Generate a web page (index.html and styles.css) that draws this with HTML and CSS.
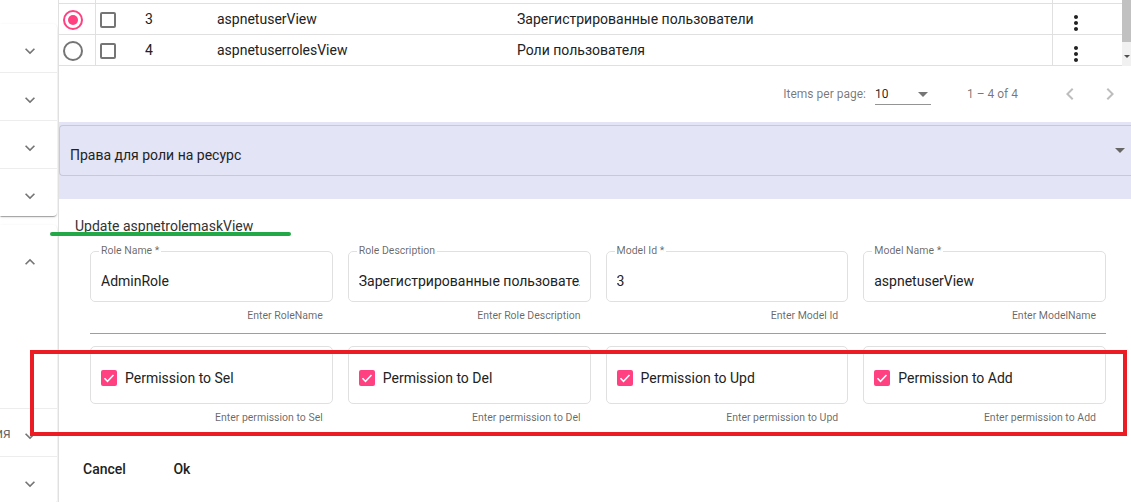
FILE: index.html
```html
<!DOCTYPE html>
<html lang="ru">
<head>
<meta charset="utf-8">
<title>Roles</title>
<link rel="stylesheet" href="styles.css">
</head>
<body>
<div class="app">
  <aside class="sidebar">
    <div class="sb-top"></div>
    <div class="sb-group">
      <div class="sb-panel"><svg class="chev" viewBox="0 0 24 24"><path d="M16.59 8.59L12 13.17 7.41 8.59 6 10l6 6 6-6z"/></svg></div>
      <div class="sb-panel"><svg class="chev" viewBox="0 0 24 24"><path d="M16.59 8.59L12 13.17 7.41 8.59 6 10l6 6 6-6z"/></svg></div>
      <div class="sb-panel"><svg class="chev" viewBox="0 0 24 24"><path d="M16.59 8.59L12 13.17 7.41 8.59 6 10l6 6 6-6z"/></svg></div>
      <div class="sb-panel"><svg class="chev" viewBox="0 0 24 24"><path d="M16.59 8.59L12 13.17 7.41 8.59 6 10l6 6 6-6z"/></svg></div>
    </div>
    <div class="sb-group">
      <div class="sb-panel sb-expanded"><svg class="chev" viewBox="0 0 24 24"><path d="M12 8l-6 6 1.41 1.41L12 10.83l4.59 4.58L18 14z"/></svg></div>
      <div class="sb-panel sb-text"><span class="sb-label">ия</span><svg class="chev" viewBox="0 0 24 24"><path d="M16.59 8.59L12 13.17 7.41 8.59 6 10l6 6 6-6z"/></svg></div>
      <div class="sb-panel sb-last"><svg class="chev" viewBox="0 0 24 24"><path d="M16.59 8.59L12 13.17 7.41 8.59 6 10l6 6 6-6z"/></svg></div>
    </div>
  </aside>

  <main class="main">
    <section class="table-area">
      <div class="table-scroll">
        <div class="table">
          <div class="row">
            <div class="cell c-radio"><span class="radio"></span></div>
            <div class="cell c-check"><span class="tbox"></span></div>
            <div class="cell c-num"></div>
            <div class="cell c-name"></div>
            <div class="cell c-desc"></div>
            <div class="cell c-menu"><svg class="kebab" viewBox="0 0 24 24"><path d="M12 8c1.1 0 2-.9 2-2s-.9-2-2-2-2 .9-2 2 .9 2 2 2zm0 2c-1.1 0-2 .9-2 2s.9 2 2 2 2-.9 2-2-.9-2-2-2zm0 6c-1.1 0-2 .9-2 2s.9 2 2 2 2-.9 2-2-.9-2-2-2z"/></svg></div>
          </div>
          <div class="row">
            <div class="cell c-radio"><span class="radio on"></span></div>
            <div class="cell c-check"><span class="tbox"></span></div>
            <div class="cell c-num">3</div>
            <div class="cell c-name">aspnetuserView</div>
            <div class="cell c-desc">Зарегистрированные пользователи</div>
            <div class="cell c-menu"><svg class="kebab" viewBox="0 0 24 24"><path d="M12 8c1.1 0 2-.9 2-2s-.9-2-2-2-2 .9-2 2 .9 2 2 2zm0 2c-1.1 0-2 .9-2 2s.9 2 2 2 2-.9 2-2-.9-2-2-2zm0 6c-1.1 0-2 .9-2 2s.9 2 2 2 2-.9 2-2-.9-2-2-2z"/></svg></div>
          </div>
          <div class="row">
            <div class="cell c-radio"><span class="radio"></span></div>
            <div class="cell c-check"><span class="tbox"></span></div>
            <div class="cell c-num">4</div>
            <div class="cell c-name">aspnetuserrolesView</div>
            <div class="cell c-desc">Роли пользователя</div>
            <div class="cell c-menu"><svg class="kebab" viewBox="0 0 24 24"><path d="M12 8c1.1 0 2-.9 2-2s-.9-2-2-2-2 .9-2 2 .9 2 2 2zm0 2c-1.1 0-2 .9-2 2s.9 2 2 2 2-.9 2-2-.9-2-2-2zm0 6c-1.1 0-2 .9-2 2s.9 2 2 2 2-.9 2-2-.9-2-2-2z"/></svg></div>
          </div>
        </div>
      </div>
      <div class="vscroll">
        <div class="vthumb"></div>
        <div class="vtrack"><span class="varrow"></span></div>
      </div>
    </section>

    <div class="paginator">
      <span class="pg-label">Items per page:</span>
      <div class="pg-select"><span>10</span><span class="pg-caret"></span></div>
      <span class="pg-range">1 – 4 of 4</span>
      <span class="pg-btn"><svg viewBox="0 0 24 24"><path d="M15.41 7.41L14 6l-6 6 6 6 1.41-1.41L10.83 12z"/></svg></span>
      <span class="pg-btn"><svg viewBox="0 0 24 24"><path d="M10 6L8.59 7.41 13.17 12l-4.58 4.59L10 18l6-6z"/></svg></span>
    </div>

    <section class="rights">
      <div class="rights-header">
        <span class="rights-title">Права для роли на ресурс</span>
        <span class="rights-caret"></span>
      </div>
    </section>

    <section class="editor">
      <div class="editor-title">Update aspnetrolemaskView</div>
      <div class="form">
        <div class="grid4">
          <div class="fcell">
            <fieldset class="field"><legend>Role Name *</legend><div class="value">AdminRole</div></fieldset>
            <div class="hint">Enter RoleName</div>
          </div>
          <div class="fcell">
            <fieldset class="field"><legend>Role Description</legend><div class="value">Зарегистрированные пользователи</div></fieldset>
            <div class="hint">Enter Role Description</div>
          </div>
          <div class="fcell">
            <fieldset class="field"><legend>Model Id *</legend><div class="value">3</div></fieldset>
            <div class="hint">Enter Model Id</div>
          </div>
          <div class="fcell">
            <fieldset class="field"><legend>Model Name *</legend><div class="value">aspnetuserView</div></fieldset>
            <div class="hint">Enter ModelName</div>
          </div>
        </div>
        <div class="divider"></div>
        <div class="grid4 perms">
          <div class="fcell">
            <div class="pfield"><span class="cb"><svg viewBox="0 0 16 16"><path d="M3.5 8.3l3 3 6-6.3"/></svg></span><span class="plabel">Permission to Sel</span></div>
            <div class="hint">Enter permission to Sel</div>
          </div>
          <div class="fcell">
            <div class="pfield"><span class="cb"><svg viewBox="0 0 16 16"><path d="M3.5 8.3l3 3 6-6.3"/></svg></span><span class="plabel">Permission to Del</span></div>
            <div class="hint">Enter permission to Del</div>
          </div>
          <div class="fcell">
            <div class="pfield"><span class="cb"><svg viewBox="0 0 16 16"><path d="M3.5 8.3l3 3 6-6.3"/></svg></span><span class="plabel">Permission to Upd</span></div>
            <div class="hint">Enter permission to Upd</div>
          </div>
          <div class="fcell">
            <div class="pfield"><span class="cb"><svg viewBox="0 0 16 16"><path d="M3.5 8.3l3 3 6-6.3"/></svg></span><span class="plabel">Permission to Add</span></div>
            <div class="hint">Enter permission to Add</div>
          </div>
        </div>
      </div>
      <div class="actions">
        <button class="btn">Cancel</button>
        <button class="btn">Ok</button>
      </div>
    </section>
  </main>

  <div class="annot-green"></div>
  <div class="annot-red"></div>
</div>
</body>
</html>
```

FILE: styles.css
```css
* { box-sizing: border-box; }
html, body { margin: 0; padding: 0; }
body {
  font-family: Roboto, "Noto Sans", "Liberation Sans", sans-serif;
  color: rgba(0,0,0,.87);
  background: #fff;
  width: 1131px;
  height: 502px;
  overflow: hidden;
}
.app {
  position: relative;
  display: flex;
  width: 1131px;
  height: 502px;
  overflow: hidden;
}

/* ---------- sidebar ---------- */
.sidebar {
  width: 59px;
  flex: none;
  border-right: 1px solid #e0e0e0;
  display: flex;
  flex-direction: column;
  overflow: hidden;
}
.sb-top { height: 24px; flex: none; }
.sb-group {
  width: 57px;
  flex: none;
  background: #fff;
  border-radius: 0 4px 4px 0;
  box-shadow: 0 2px 1px -1px rgba(0,0,0,.2), 0 1px 1px 0 rgba(0,0,0,.14), 0 1px 3px 0 rgba(0,0,0,.12);
}
.sb-group + .sb-group { margin-top: 9px; }
.sb-panel {
  height: 48px;
  display: flex;
  align-items: center;
  padding-top: 6px;
  padding-left: 20px;
  border-top: 1px solid #ededed;
}
.sb-panel:first-child { border-top: none; }
.sb-expanded {
  height: 183px;
  align-items: flex-start;
  padding-top: 27px;
}
.sb-text { padding-left: 0; padding-top: 6px; }
.sb-last { padding-top: 6px; }
.sb-label {
  font-size: 14px;
  color: rgba(0,0,0,.6);
  width: 20px;
  margin-left: -5px;
  margin-right: 5px;
  margin-top: -5px;
  white-space: nowrap;
}
.chev { width: 20px; height: 20px; fill: #757575; display: block; flex: none; }

/* ---------- table ---------- */
.main {
  flex: 1;
  min-width: 0;
  display: flex;
  flex-direction: column;
}
.table-area { height: 66px; flex: none; display: flex; }
.table-scroll { flex: 1; overflow: hidden; }
.table { margin-top: -27px; }
.row {
  display: grid;
  grid-template-columns: 37px 49px 72px 300px 536px 69px;
  height: 31px;
  border-bottom: 1px solid #e0e0e0;
  font-size: 14px;
  color: #222;
}
.cell { display: flex; align-items: center; min-width: 0; white-space: nowrap; }
.c-num, .c-name, .c-desc { padding-bottom: 2px; }
.c-radio { border-right: 1px solid #e0e0e0; padding-left: 4px; }
.c-check { padding-left: 4px; }
.c-desc { border-right: 1px solid #e0e0e0; }
.c-menu { align-items: flex-start; padding-left: 11px; padding-top: 7px; }
.kebab { width: 24px; height: 24px; fill: #222; display: block; flex: none; }
.radio {
  width: 20px; height: 20px;
  border-radius: 50%;
  border: 2px solid #757575;
  display: flex; align-items: center; justify-content: center;
}
.radio.on { border-color: #ff4081; }
.radio.on::after {
  content: "";
  width: 10px; height: 10px;
  border-radius: 50%;
  background: #ff4081;
}
.tbox {
  width: 16px; height: 16px;
  border: 2px solid #757575;
  border-radius: 2px;
}
.vscroll {
  width: 9px;
  flex: none;
  display: flex;
  flex-direction: column;
  background: #f1f1f1;
}
.vthumb { height: 42px; background: #c1c1c1; }
.vtrack {
  flex: 1;
  display: flex;
  justify-content: center;
  align-items: flex-end;
  padding-bottom: 8px;
}
.varrow {
  width: 0; height: 0;
  border-left: 3px solid transparent;
  border-right: 3px solid transparent;
  border-top: 3px solid #505050;
}

/* ---------- paginator ---------- */
.paginator {
  height: 56px;
  flex: none;
  display: flex;
  justify-content: flex-end;
  align-items: center;
  padding-right: 1px;
  font-size: 12px;
  color: rgba(0,0,0,.54);
}
.pg-label { margin-right: 9px; }
.pg-select {
  width: 56px;
  display: flex;
  align-items: center;
  justify-content: space-between;
  padding: 4px 3px 3px 0;
  line-height: 14px;
  border-bottom: 1px solid rgba(0,0,0,.42);
  color: rgba(0,0,0,.87);
  margin-right: 36px;
}
.pg-caret {
  width: 0; height: 0;
  border-left: 5px solid transparent;
  border-right: 5px solid transparent;
  border-top: 5px solid #757575;
}
.pg-range { margin-right: 32px; }
.pg-btn {
  width: 40px; height: 40px;
  display: flex; align-items: center; justify-content: center;
}
.pg-btn svg { width: 24px; height: 24px; fill: rgba(0,0,0,.26); }

/* ---------- rights section ---------- */
.rights {
  height: 77px;
  flex: none;
  background: #e4e4f7;
  padding-top: 3px;
}
.rights-header {
  height: 51px;
  border: 1px solid #c8c8dc;
  border-right: none;
  border-radius: 4px 0 0 4px;
  display: flex;
  align-items: center;
  justify-content: space-between;
  padding-left: 10px;
  padding-right: 6px;
  font-size: 14px;
  color: #222;
}
.rights-title { padding-top: 9px; }
.rights-caret {
  width: 0; height: 0;
  border-left: 5px solid transparent;
  border-right: 5px solid transparent;
  border-top: 5px solid #666;
}

/* ---------- editor ---------- */
.editor {
  flex: 1;
  background: #fff;
  border-radius: 4px 0 0 0;
}
.editor-title {
  padding: 17px 0 0 16px;
  font-size: 14px;
  line-height: 20px;
  color: #333;
}
.form { margin: 9px 25px 0 31px; }
.grid4 {
  display: grid;
  grid-template-columns: repeat(4, 1fr);
  column-gap: 15px;
}
.fcell { min-width: 0; }
.field {
  margin: 0;
  padding: 14px 10px 10px;
  border: 1px solid #e0e0e0;
  border-radius: 5px;
  min-width: 0;
}
.field legend {
  font-size: 10.5px;
  line-height: 12px;
  padding: 0 2px;
  margin-left: -2px;
  color: rgba(0,0,0,.6);
}
.value {
  font-size: 14px;
  line-height: 20px;
  white-space: nowrap;
  overflow: hidden;
  color: #222;
}
.hint {
  font-size: 10.5px;
  line-height: 12px;
  text-align: right;
  padding-right: 10px;
  margin-top: 8px;
  color: rgba(0,0,0,.6);
  white-space: nowrap;
}
.divider {
  margin-top: 11px;
  border-top: 1px solid #9e9e9e;
}
.perms { margin-top: 12px; }
.pfield {
  height: 58px;
  border: 1px solid #e0e0e0;
  border-radius: 5px;
  padding: 21px 10px 0;
  display: flex;
  align-items: flex-start;
}
.cb {
  width: 16px; height: 16px;
  flex: none;
  border-radius: 2px;
  background: #ff4081;
  margin-top: 2px;
  margin-right: 8px;
}
.cb svg { width: 16px; height: 16px; display: block; fill: none; stroke: #fff; stroke-width: 1.6; }
.plabel { font-size: 14px; line-height: 20px; color: #222; }
.actions {
  display: flex;
  gap: 8px;
  padding-left: 8px;
  margin-top: 27px;
}
.btn {
  height: 36px;
  min-width: 64px;
  padding: 0 16px;
  font-family: inherit;
  font-size: 14px;
  font-weight: 500;
  background: none;
  border: none;
  color: #222;
}

/* ---------- annotations ---------- */
.annot-green {
  position: absolute;
  left: 50px; top: 232px;
  width: 241px; height: 4px;
  background: #22a846;
  border-radius: 2px;
}
.annot-red {
  position: absolute;
  left: 30px; top: 350px;
  width: 1097px; height: 86px;
  border: 4px solid #ec1c24;
  pointer-events: none;
}
```
